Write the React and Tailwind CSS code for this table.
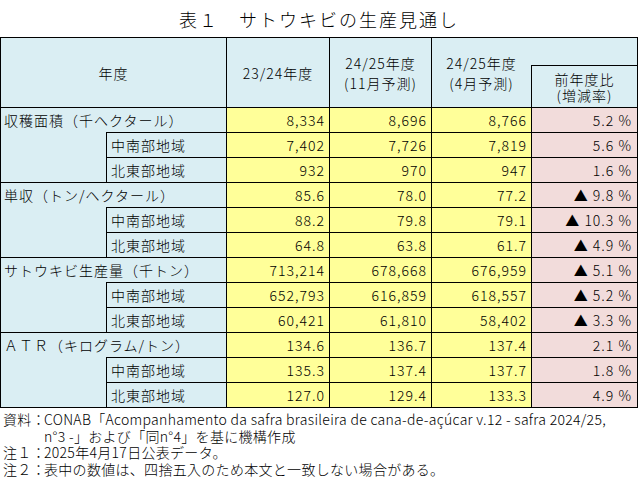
const groups = [
  {
    label: '収穫面積（千ヘクタール）',
    v: ['8,334', '8,696', '8,766'],
    r: '5.2 %',
    subs: [
      { label: '中南部地域', v: ['7,402', '7,726', '7,819'], r: '5.6 %' },
      { label: '北東部地域', v: ['932', '970', '947'], r: '1.6 %' },
    ],
  },
  {
    label: '単収（トン/ヘクタール）',
    v: ['85.6', '78.0', '77.2'],
    r: '▲ 9.8 %',
    subs: [
      { label: '中南部地域', v: ['88.2', '79.8', '79.1'], r: '▲ 10.3 %' },
      { label: '北東部地域', v: ['64.8', '63.8', '61.7'], r: '▲ 4.9 %' },
    ],
  },
  {
    label: 'サトウキビ生産量（千トン）',
    v: ['713,214', '678,668', '676,959'],
    r: '▲ 5.1 %',
    subs: [
      { label: '中南部地域', v: ['652,793', '616,859', '618,557'], r: '▲ 5.2 %' },
      { label: '北東部地域', v: ['60,421', '61,810', '58,402'], r: '▲ 3.3 %' },
    ],
  },
  {
    label: 'ＡＴＲ（キログラム/トン）',
    v: ['134.6', '136.7', '137.4'],
    r: '2.1 %',
    subs: [
      { label: '中南部地域', v: ['135.3', '137.4', '137.7'], r: '1.8 %' },
      { label: '北東部地域', v: ['127.0', '129.4', '133.3'], r: '4.9 %' },
    ],
  },
];

const cell = 'border border-black p-0';
const blue = 'bg-[#daeef3]';

function Values({ v, r }) {
  return (
    <>
      {v.map((n, i) => (
        <td key={i} className={`${cell} bg-[#ffff99] text-right pr-[4px]`}>
          {n}
        </td>
      ))}
      <td className={`${cell} bg-[#f2dcdb] text-right pr-[5px]`}>{r}</td>
    </>
  );
}

function Note({ label, children }) {
  return (
    <div className="flex">
      <span className="w-[44px] pl-[3px] shrink-0 whitespace-nowrap">{label}</span>
      <span>{children}</span>
    </div>
  );
}

export default function App() {
  return (
    <div className="w-[638px] h-[478px] bg-white text-black font-light [font-family:'Noto_Sans_CJK_JP',sans-serif]">
      <div className="h-[37px] flex items-center justify-center pt-[2px] text-[18px] tracking-[2px]">
        表１　サトウキビの生産見通し
      </div>

      <table className="table-fixed border-collapse w-[637px] text-[14px] tracking-[1px] leading-[18px]">
        <colgroup>
          <col className="w-[106px]" />
          <col className="w-[120px]" />
          <col className="w-[103px]" />
          <col className="w-[102px]" />
          <col className="w-[100px]" />
          <col className="w-[106px]" />
        </colgroup>
        <thead>
          <tr className="h-[28px]">
            <th colSpan={2} rowSpan={2} className={`${cell} ${blue} font-light`}>年度</th>
            <th rowSpan={2} className={`${cell} ${blue} font-light`}>23/24年度</th>
            <th rowSpan={2} className={`${cell} ${blue} font-light leading-[20px]`}>
              24/25年度<br />(11月予測)
            </th>
            <th rowSpan={2} className={`${cell} ${blue} font-light leading-[20px] border-r-0`}>
              24/25年度<br />(4月予測)
            </th>
            <th className={`${cell} ${blue} border-l-0 border-b-0`}></th>
          </tr>
          <tr className="h-[42px]">
            <th className={`${cell} ${blue} font-light leading-[16px]`}>
              前年度比<br />(増減率)
            </th>
          </tr>
        </thead>
        <tbody>
          {groups.map((g) => (
            <GroupRows key={g.label} g={g} />
          ))}
        </tbody>
      </table>

      <div className="mt-[3px] text-[14px] leading-[16.5px] tracking-[0.3px]">
        <Note label="資料：">
          CONAB「Acompanhamento da safra brasileira de cana-de-açúcar v.12 - safra 2024/25,
          <br />
          n°3 -」および「同n°4」を基に機構作成
        </Note>
        <Note label="注１：">2025年4月17日公表データ。</Note>
        <Note label="注２：">表中の数値は、四捨五入のため本文と一致しない場合がある。</Note>
      </div>
    </div>
  );
}

function GroupRows({ g }) {
  return (
    <>
      <tr className="h-[25px]">
        <td colSpan={2} className={`${cell} ${blue} border-b-0 pl-[3px] whitespace-nowrap`}>
          {g.label}
        </td>
        <Values v={g.v} r={g.r} />
      </tr>
      {g.subs.map((s, i) => (
        <tr key={s.label} className="h-[25px]">
          {i === 0 && <td rowSpan={2} className={`${cell} ${blue} border-t-0`}></td>}
          <td className={`${cell} ${blue} pl-[4px]`}>{s.label}</td>
          <Values v={s.v} r={s.r} />
        </tr>
      ))}
    </>
  );
}
